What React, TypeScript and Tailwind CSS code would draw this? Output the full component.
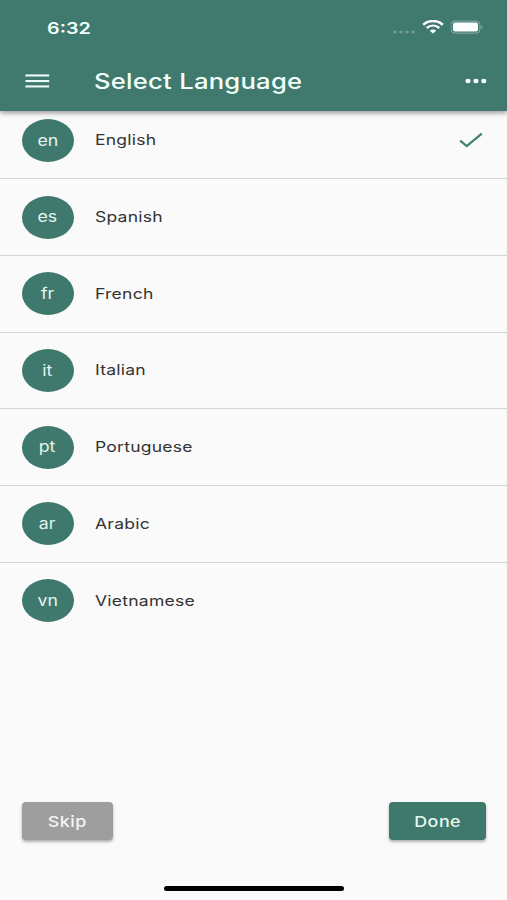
import { clsx } from "clsx";

type Language = {
  code: string;
  name: string;
};

const languages: Language[] = [
  { code: "en", name: "English" },
  { code: "es", name: "Spanish" },
  { code: "fr", name: "French" },
  { code: "it", name: "Italian" },
  { code: "pt", name: "Portuguese" },
  { code: "ar", name: "Arabic" },
  { code: "vn", name: "Vietnamese" },
];

const StatusBar = () => (
  <div className="flex h-[54px] items-center justify-between pr-[23px] pl-[46.5px]">
    <span className="origin-left scale-x-[1.22] pt-[1.5px] text-[16.2px] leading-none font-semibold">6:32</span>
    <div className="flex items-center">
      <svg className="mt-[9px] mr-[6px]" width="24" height="4" viewBox="0 0 24 4" fill="#fff" fillOpacity="0.27">
        <ellipse cx="3" cy="2" rx="1.9" ry="1.5" />
        <ellipse cx="9" cy="2" rx="1.9" ry="1.5" />
        <ellipse cx="15" cy="2" rx="1.9" ry="1.5" />
        <ellipse cx="21" cy="2" rx="1.9" ry="1.5" />
      </svg>
      <svg className="mr-[7px]" width="22" height="14" viewBox="0 0 22 14" fill="none" stroke="#fff">
        <path d="M1.2 4.8C6.8 -0.2 15.2 -0.2 20.8 4.8" strokeWidth="2.6" />
        <path d="M4.7 8C8.5 4.8 13.5 4.8 17.3 8" strokeWidth="2.4" />
        <path d="M7.8 10.8C9.7 9.2 12.3 9.2 14.2 10.8L11 13.6Z" fill="#fff" stroke="none" />
      </svg>
      <svg width="33" height="14" viewBox="0 0 33 14" fill="none">
        <rect x="0.1" y="1.1" width="28.8" height="12" rx="3.6" stroke="#fff" strokeOpacity="0.4" />
        <rect x="2" y="2.6" width="25" height="9" rx="2" fill="#fff" />
        <path d="M30.4 5.4C31.8 5.9 31.8 8.5 30.4 9Z" fill="#fff" fillOpacity="0.5" />
      </svg>
    </div>
  </div>
);

const AppBar = () => (
  <div className="flex h-14 items-center pt-px pr-5 pb-1 pl-[25px]">
    <svg width="25" height="14" viewBox="0 0 25 14" fill="#e9fbf6">
      <rect x="0.4" y="0.4" width="23.8" height="2.1" />
      <rect x="0.4" y="6" width="23.8" height="2.1" />
      <rect x="0.4" y="11.4" width="23.8" height="2.1" />
    </svg>
    <h1 className="ml-[44px] origin-left scale-x-[1.22] pt-0.5 text-[21px] leading-none font-medium tracking-[0.2px] whitespace-nowrap">
      Select Language
    </h1>
    <svg className="ml-auto" width="22" height="6" viewBox="0 0 22 6" fill="#fff">
      <ellipse cx="3" cy="3" rx="2.6" ry="2.2" />
      <ellipse cx="10.9" cy="3" rx="2.6" ry="2.2" />
      <ellipse cx="18.8" cy="3" rx="2.6" ry="2.2" />
    </svg>
  </div>
);

const LanguageRow = ({ language, selected, last }: { language: Language; selected: boolean; last: boolean }) => (
  <li
    className={clsx(
      "flex h-[76.7px] items-center pr-6 pl-[21.5px]",
      !last && "border-b-[1.2px] border-[#ccd8d8]"
    )}
  >
    <div className="flex h-[43px] w-[52px] items-center justify-center rounded-[50%] bg-[#3f796d] text-[15px] text-[#e4f5f0]">
      <span className="scale-x-[1.18] pt-px">{language.code}</span>
    </div>
    <span className="ml-[21px] origin-left scale-x-[1.2] pt-[2px] text-[14.6px] tracking-[0.2px] text-[#333]">
      {language.name}
    </span>
    {selected && (
      <svg className="ml-auto" width="24" height="16" viewBox="0 0 24 16" fill="none" stroke="#3f806e" strokeWidth="2.2">
        <path d="M1.2 8.6L7.7 14L22.8 1.6" />
      </svg>
    )}
  </li>
);

const App = () => {
  return (
    <div
      className="flex h-[900px] w-[507px] flex-col overflow-hidden bg-[#fafafa]"
      style={{ fontFamily: 'Inter, "Liberation Sans", sans-serif' }}
    >
      <header className="z-10 h-[110.5px] shrink-0 bg-[#40796d] text-[#f0fffb] shadow-[0_2px_5px_rgba(0,0,0,0.4)]">
        <StatusBar />
        <AppBar />
      </header>

      {/* the first row starts slightly under the app bar */}
      <ul className="-mt-[8px]">
        {languages.map((language, i) => (
          <LanguageRow
            key={language.code}
            language={language}
            selected={language.code === "en"}
            last={i === languages.length - 1}
          />
        ))}
      </ul>

      <footer className="mt-auto">
        <div className="flex justify-between pr-[21px] pl-[22px]">
          <button className="flex h-[38px] w-[91px] items-center justify-center rounded-[4px] bg-[#9e9e9e] text-[15px] font-medium text-[#f4f4f4] shadow-[0_2px_3px_rgba(0,0,0,0.3)]">
            <span className="scale-x-[1.19] pt-[2px] pr-px tracking-[0.4px]">Skip</span>
          </button>
          <button className="flex h-[38px] w-[97px] items-center justify-center rounded-[4px] bg-[#3f796b] text-[15px] font-medium text-[#e6faf4] shadow-[0_2px_3px_rgba(0,0,0,0.3)]">
            <span className="scale-x-[1.19] pt-[2px] tracking-[0.4px]">Done</span>
          </button>
        </div>
        <div className="mx-auto mt-[46px] mb-[9px] h-[5px] w-[180px] rounded-full bg-black" />
      </footer>
    </div>
  );
};

export default App;
